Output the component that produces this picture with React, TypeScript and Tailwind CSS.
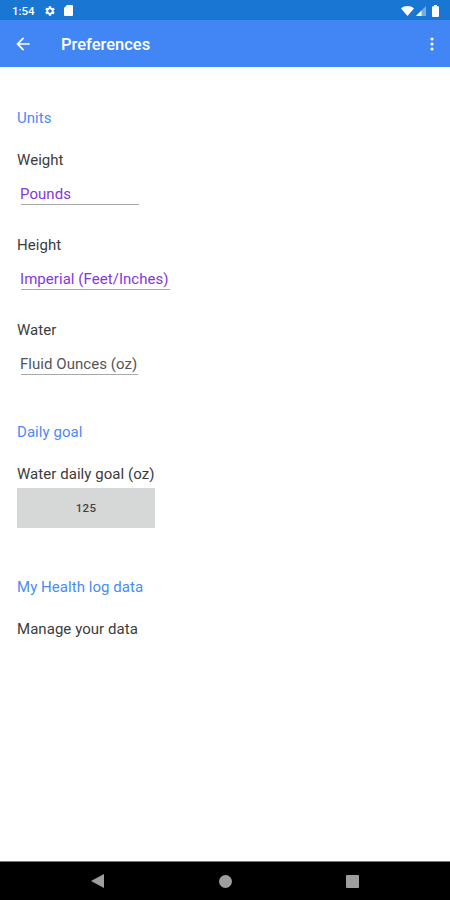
import type { ReactNode } from 'react'
import { MdArrowBack, MdSettings } from 'react-icons/md'

type UnitFieldProps = {
  label: string
  value: string
  valueClass: string
}

function StatusBar() {
  return (
    <div className="flex h-5 shrink-0 items-center justify-between bg-[#1976d2] pl-3 pr-[11px] text-white">
      <div className="flex items-center">
        <span className="w-8 pt-[2px] text-[11.5px] font-medium leading-[18px]">1:54</span>
        <MdSettings className="mt-[2px] h-3 w-3" />
        <svg viewBox="0 0 9 11" className="ml-2 mt-px h-[11px] w-[9px]" fill="currentColor">
          <path d="M3 0h5a1 1 0 0 1 1 1v9a1 1 0 0 1-1 1H1a1 1 0 0 1-1-1V3z" />
        </svg>
      </div>
      <div className="flex items-center pt-px">
        <svg viewBox="0 0 13 10" className="h-[10px] w-[13px]" fill="currentColor">
          <path d="M0 2.400C3.800-.8 9.200-.8 13 2.400L6.500 10z" />
        </svg>
        <svg viewBox="0 0 10 10" className="ml-[2px] h-[10px] w-[10px]" fill="currentColor">
          <path d="M10 0v10H0z" opacity="0.4" />
          <path d="M5.500 4.500V10H0z" />
        </svg>
        <svg viewBox="0 0 7 12" className="ml-[6px] h-3 w-[7px]" fill="currentColor">
          <path d="M2 0h3v1.200h1a1 1 0 0 1 1 1V11a1 1 0 0 1-1 1H1a1 1 0 0 1-1-1V2.200a1 1 0 0 1 1-1h1z" />
        </svg>
      </div>
    </div>
  )
}

function AppBar() {
  return (
    <header className="flex h-[47px] shrink-0 items-center bg-[#4285f4] pl-[13px] pr-4 text-white">
      <button type="button" aria-label="Back">
        <MdArrowBack className="h-5 w-5" />
      </button>
      <h1 className="ml-7 flex-1 pt-[3px] text-[16.5px] font-medium leading-5">Preferences</h1>
      <button type="button" aria-label="More options">
        <svg viewBox="0 0 4 14" className="h-[14px] w-1" fill="currentColor">
          <circle cx="2" cy="2" r="1.600" />
          <circle cx="2" cy="7" r="1.600" />
          <circle cx="2" cy="12" r="1.600" />
        </svg>
      </button>
    </header>
  )
}

function SectionTitle({ children }: { children: ReactNode }) {
  return <h2 className="text-[#4b8bf5]">{children}</h2>
}

function UnitField({ label, value, valueClass }: UnitFieldProps) {
  return (
    <div>
      <p>{label}</p>
      <div className={`ml-1 mt-[14px] h-[21px] whitespace-nowrap border-b border-[#a8a8a8] ${valueClass}`}>
        <span className="-ml-px">{value}</span>
      </div>
    </div>
  )
}

function NavBar() {
  return (
    <nav className="flex h-[39px] shrink-0 items-center justify-between border-t border-[#777] bg-black px-[91px] text-[#9e9e9e]">
      <svg viewBox="0 0 13 14" className="h-[14px] w-[13px]" fill="currentColor">
        <path d="M13 0v14L0 7z" />
      </svg>
      <span className="h-[13px] w-[13px] rounded-full bg-[#9e9e9e]" />
      <span className="h-[13px] w-[13px] rounded-[1px] bg-[#9e9e9e]" />
    </nav>
  )
}

export default function App() {
  return (
    <div className="flex h-[900px] w-[450px] flex-col overflow-hidden bg-white font-[Roboto,sans-serif]">
      <StatusBar />
      <AppBar />
      <main className="flex-1 pl-[17px] pt-[41px] text-[15px] leading-5 tracking-[0.05px] text-[#3c3c3c]">
        <section>
          <SectionTitle>Units</SectionTitle>
          <div className="mt-[22px] space-y-[30px]">
            <UnitField label="Weight" value="Pounds" valueClass="w-[118px] text-[#8338dc]" />
            <UnitField label="Height" value="Imperial (Feet/Inches)" valueClass="w-[149px] text-[#8338dc]" />
            <UnitField label="Water" value="Fluid Ounces (oz)" valueClass="w-[117px] text-[#555]" />
          </div>
        </section>

        <section className="mt-[47px]">
          <SectionTitle>Daily goal</SectionTitle>
          <p className="mt-[22px]">Water daily goal (oz)</p>
          <button
            type="button"
            className="mt-1 block h-10 w-[138px] bg-[#d6d7d7] text-[11.5px] font-medium tracking-[0.3px] text-[#444]"
          >
            125
          </button>
        </section>

        <section className="mt-[49px]">
          <SectionTitle>My Health log data</SectionTitle>
          <p className="mt-[22px]">Manage your data</p>
        </section>
      </main>
      <NavBar />
    </div>
  )
}
